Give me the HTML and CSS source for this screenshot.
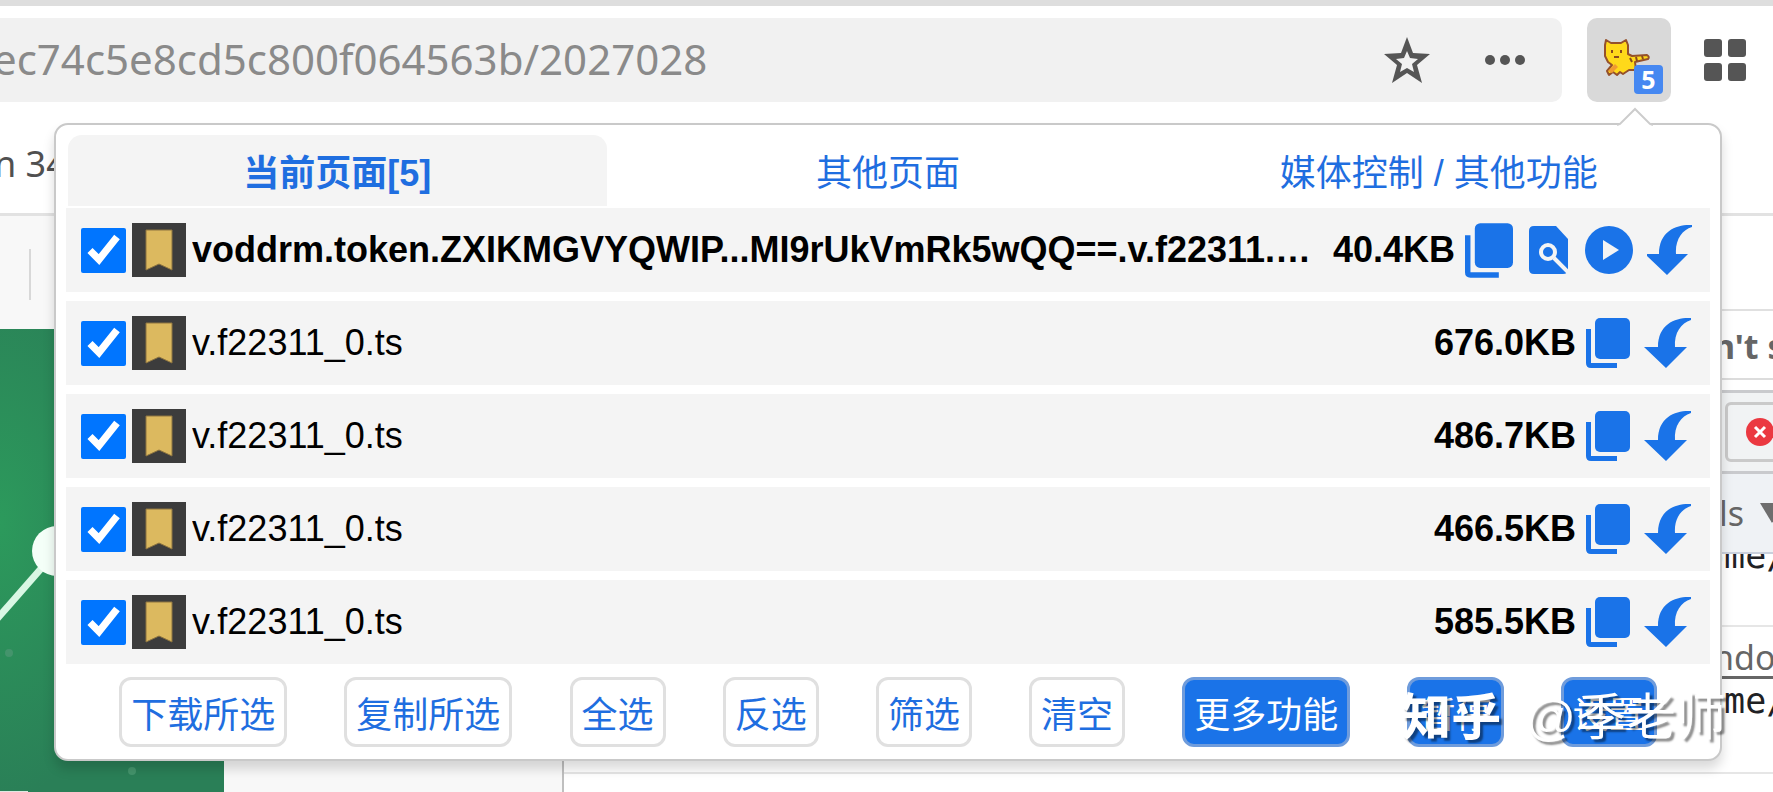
FILE: index.html
```html
<!DOCTYPE html>
<html lang="zh-CN">

<head>
    <meta charset="UTF-8">
    <meta name="viewport" content="width=device-width, initial-scale=1.0">
    <title>猫抓</title>
    <link rel="stylesheet" href="styles.css">
</head>

<body>
    <!-- icons used more than once -->
    <svg class="sprite" aria-hidden="true">
        <symbol id="copy" viewBox="0 0 44 50">
            <rect x="9" y="0" width="35" height="41" rx="5" />
            <path d="M0 11h5v34h26v5H5q-5 0-5-5z" />
        </symbol>
        <symbol id="down" viewBox="0 0 48 52">
            <path d="M47 1C33 0 14 6 14 30H0l22 21 21-21H31C30 16 37 6 47 3z" />
        </symbol>
        <symbol id="bookmark" viewBox="0 0 54 54">
            <rect width="54" height="54" fill="#3c3c3c" />
            <path d="M14 7h26v40l-13-6-13 6z" fill="#dcb95f" stroke="#8d7440" />
        </symbol>
    </svg>

    <div class="toolbar">
        <div class="address">
            <input type="text" class="url" aria-label="地址" value="ec74c5e8cd5c800f064563b/2027028">
            <button class="tool" aria-label="收藏">
                <svg width="48" height="48" viewBox="0 0 48 48"><path fill-rule="evenodd" fill="#555" d="M24 1l6 16 17 1-13 11 5 18-15-10-15 10 5-18L1 18l17-1zM24 15l-3 7-8 1 6 5-2 8 7-4 7 4-2-8 6-5-8-1z" /></svg>
            </button>
            <button class="tool" aria-label="更多">
                <svg width="40" height="10" viewBox="0 0 40 10" fill="#555"><circle cx="5" cy="5" r="5" /><circle cx="20" cy="5" r="5" /><circle cx="35" cy="5" r="5" /></svg>
            </button>
        </div>
        <button class="extension" aria-label="猫抓">
            <svg width="48" height="40" viewBox="0 0 48 40" stroke-linejoin="round">
                <path d="M3 2l5 3h10l5-3 2 5v9l4 2 15-1q3 2 1 4l-13 3 1 8h-7l-6 4-3-2-3 3-4-3-4 3-2-4 5-6-4-3-3-6V7z" fill="#ffd91a" stroke="#95512b" stroke-width="2" />
                <path d="M5 33l7-7 3 3-6 6z" fill="#f09a32" />
                <path d="M9 12v3M18 12v3M11 19h5M27 20l2 4M33 19l1 4M39 18l1 3" fill="none" stroke="#8a4a1c" stroke-width="2" />
            </svg>
            <span class="badge">5</span>
        </button>
        <button class="tool" aria-label="扩展">
            <svg width="42" height="42" viewBox="0 0 42 42" fill="#555"><rect width="18" height="18" rx="3" /><rect x="24" width="18" height="18" rx="3" /><rect y="24" width="18" height="18" rx="3" /><rect x="24" y="24" width="18" height="18" rx="3" /></svg>
        </button>
    </div>

    <div class="bookmarks">n 34</div>

    <div class="page">
        <div class="site">
            <div class="site-head"><span class="divider"></span></div>
            <svg class="cover" viewBox="0 0 224 463" preserveAspectRatio="xMinYMin slice">
                <defs>
                    <radialGradient id="green" cx="0" cy="0.42" r="0.6">
                        <stop offset="0" stop-color="#2c9a5c" />
                        <stop offset="1" stop-color="#2a7f57" />
                    </radialGradient>
                </defs>
                <rect width="224" height="463" fill="url(#green)" />
                <path d="M-4 291L46 234" stroke="#d9f7e4" stroke-width="7" />
                <circle cx="57" cy="222" r="25" fill="#f4fff8" />
                <circle cx="9" cy="324" r="4" fill="#44946c" />
                <circle cx="132" cy="442" r="4" fill="#44946c" />
                <rect y="462" width="28" height="2" fill="#dfe8e2" />
            </svg>
        </div>
        <div class="devtools">
            <div class="dt-blank"></div>
            <div class="dt-title"><b>n't s</b></div>
            <div class="dt-tabs">
                <div class="dt-errors">
                    <svg width="28" height="28" viewBox="0 0 28 28"><circle cx="14" cy="14" r="14" fill="#eb3941" /><path d="M9 9l10 10M19 9L9 19" stroke="#fff" stroke-width="3" /></svg>
                </div>
            </div>
            <div class="dt-levels"><span>ls</span><svg width="24" height="20" viewBox="0 0 24 20"><path d="M0 0h24L12 20z" fill="#6e6e6e" /></svg></div>
            <div class="dt-log first"><code>ome/</code></div>
            <div class="dt-log"><a href="#">ndo</a><code>ome/</code></div>
        </div>
    </div>

    <div class="popup">
        <svg class="arrow" width="36" height="20" viewBox="0 0 36 20"><path d="M0 18L3 17 18 2l15 15 3 1v2H0z" fill="#fff" /><path d="M0 18l3-1L18 2l15 15 3 1" fill="none" stroke="#ccc" stroke-width="2" /></svg>

        <div class="tabs">
            <button class="tab active">当前页面[5]</button>
            <button class="tab">其他页面</button>
            <button class="tab">媒体控制 / 其他功能</button>
        </div>

        <div class="list">
            <div class="item">
                <input type="checkbox" id="f1" checked>
                <svg class="favicon"><use href="#bookmark" /></svg>
                <label class="name bold" for="f1">voddrm.token.ZXIKMGVYQWIP...MI9rUkVmRk5wQQ==.v.f22311.…</label>
                <span class="size">40.4KB</span>
                <button class="icon" aria-label="复制"><svg width="48" height="55"><use href="#copy" /></svg></button>
                <button class="icon wide" aria-label="解析"><svg width="40" height="48" viewBox="0 0 40 48"><path d="M5 0h22l12 13v30q0 5-5 5H5q-5 0-5-5V5q0-5 5-5z" /><path d="M25 32l14 14" stroke="#f4f4f4" stroke-width="4" /><circle cx="19" cy="26" r="7" stroke="#f4f4f4" stroke-width="4" /></svg></button>
                <button class="icon wide" aria-label="播放"><svg width="48" height="48" viewBox="0 0 48 48"><circle cx="24" cy="24" r="24" /><path d="M18 14v20l16-10z" fill="#f4f4f4" /></svg></button>
                <button class="icon" aria-label="下载"><svg width="45" height="52" viewBox="2 0 45 52"><use href="#down" width="48" height="52" /></svg></button>
            </div>
            <div class="item">
                <input type="checkbox" id="f2" checked>
                <svg class="favicon"><use href="#bookmark" /></svg>
                <label class="name" for="f2">v.f22311_0.ts</label>
                <span class="size">676.0KB</span>
                <button class="icon" aria-label="复制"><svg width="44" height="50"><use href="#copy" /></svg></button>
                <button class="icon" aria-label="下载"><svg width="48" height="52"><use href="#down" /></svg></button>
            </div>
            <div class="item">
                <input type="checkbox" id="f3" checked>
                <svg class="favicon"><use href="#bookmark" /></svg>
                <label class="name" for="f3">v.f22311_0.ts</label>
                <span class="size">486.7KB</span>
                <button class="icon" aria-label="复制"><svg width="44" height="50"><use href="#copy" /></svg></button>
                <button class="icon" aria-label="下载"><svg width="48" height="52"><use href="#down" /></svg></button>
            </div>
            <div class="item">
                <input type="checkbox" id="f4" checked>
                <svg class="favicon"><use href="#bookmark" /></svg>
                <label class="name" for="f4">v.f22311_0.ts</label>
                <span class="size">466.5KB</span>
                <button class="icon" aria-label="复制"><svg width="44" height="50"><use href="#copy" /></svg></button>
                <button class="icon" aria-label="下载"><svg width="48" height="52"><use href="#down" /></svg></button>
            </div>
            <div class="item">
                <input type="checkbox" id="f5" checked>
                <svg class="favicon"><use href="#bookmark" /></svg>
                <label class="name" for="f5">v.f22311_0.ts</label>
                <span class="size">585.5KB</span>
                <button class="icon" aria-label="复制"><svg width="44" height="50"><use href="#copy" /></svg></button>
                <button class="icon" aria-label="下载"><svg width="48" height="52"><use href="#down" /></svg></button>
            </div>
        </div>

        <div class="actions">
            <button class="btn">下载所选</button>
            <button class="btn">复制所选</button>
            <button class="btn">全选</button>
            <button class="btn">反选</button>
            <button class="btn">筛选</button>
            <button class="btn">清空</button>
            <button class="btn primary">更多功能</button>
            <button class="btn primary">暂停</button>
            <button class="btn primary">设置</button>
        </div>
    </div>

    <div class="watermark"><b>知乎</b><span>@季老师</span></div>
</body>

</html>
```
FILE: styles.css
```css
* {
    margin: 0;
    padding: 0;
    box-sizing: border-box;
}

body {
    position: relative;
    display: flex;
    flex-direction: column;
    height: 100vh;
    overflow: hidden;
    background: #fff;
    border-top: 6px solid #dedede;
    font-family: "Liberation Sans", "Noto Sans CJK SC", sans-serif;
    font-size: 36px;
}

button {
    font: inherit;
    background: none;
    border: none;
}

svg {
    display: block;
}

.sprite {
    position: absolute;
    width: 0;
    height: 0;
}

/* browser toolbar */
.toolbar {
    display: flex;
    align-items: center;
    padding: 12px 27px 0 0;
}

.address {
    flex: 1;
    display: flex;
    align-items: center;
    gap: 54px;
    height: 84px;
    padding-right: 37px;
    margin-right: 25px;
    background: #f1f1f1;
    border-radius: 0 10px 10px 0;
}

.url {
    flex: 1;
    min-width: 0;
    height: 84px;
    margin-left: -7px;
    padding-bottom: 4px;
    border: none;
    background: none;
    color: #8a8a8a;
    font-family: "Noto Sans", sans-serif;
    font-size: 42px;
}

.extension {
    position: relative;
    width: 84px;
    height: 84px;
    margin-right: 33px;
    padding: 0 0 4px 16px;
    background: #d9d9d9;
    border-radius: 10px;
}

.badge {
    position: absolute;
    right: 8px;
    bottom: 8px;
    width: 29px;
    height: 29px;
    border-radius: 4px;
    background: #4688f1;
    color: #fff;
    font: bold 25px/29px "Noto Sans", sans-serif;
}

.bookmarks {
    height: 114px;
    padding-top: 12px;
    border-bottom: 3px solid #e2e2e2;
    color: #505050;
    font: 36px/100px "Noto Sans", sans-serif;
    text-indent: -6px;
}

/* page behind the popup */
.page {
    flex: 1;
    display: flex;
    min-height: 0;
}

.site {
    width: 564px;
    display: flex;
    flex-direction: column;
    background: #f8f8f8;
    border-right: 2px solid #bfbfbf;
}

.site-head {
    padding: 33px 29px 29px;
}

.divider {
    display: block;
    width: 2px;
    height: 51px;
    background: #d8d8d8;
}

.cover {
    flex: 1;
    width: 224px;
    min-height: 0;
}

.devtools {
    flex: 1;
    display: flex;
    flex-direction: column;
    color: #666;
    font: 34px/40px "Noto Sans", sans-serif;
}

.devtools > div {
    display: flex;
    flex-shrink: 0;
    align-items: center;
    padding-left: calc(100% - 60px);
    overflow: hidden;
    white-space: nowrap;
}

.devtools .dt-blank {
    height: 95px;
    border-bottom: 2px solid #e0e0e0;
}

.devtools .dt-title {
    height: 69px;
    padding-top: 3px;
    border-bottom: 2px solid #dcdcdc;
}

.devtools .dt-tabs {
    height: 84px;
    margin-top: 10px;
    padding-left: calc(100% - 48px);
    background: #f1f3f4;
    border-top: 3px solid #c9cacd;
    border-bottom: 3px solid #c9cacd;
}

.dt-errors {
    flex-shrink: 0;
    width: 90px;
    height: 60px;
    padding: 13px 18px;
    border: 3px solid #cacaca;
    border-radius: 6px;
}

.devtools .dt-levels {
    height: 80px;
    padding-left: calc(100% - 54px);
    gap: 16px;
    background: #eff2f5;
    border-bottom: 2px solid #c9d0dc;
}

.dt-levels svg {
    flex-shrink: 0;
}

.devtools .dt-log {
    flex-direction: column;
    align-items: flex-start;
    height: 147px;
    padding-top: 10px;
    border-bottom: 2px solid #e6e6e6;
}

.devtools .dt-log.first {
    height: 73px;
    padding-top: 0;
}

.dt-log.first code {
    margin-top: -22px;
}

.dt-log a {
    color: #666;
    text-underline-offset: 6px;
}

.dt-log code {
    margin-left: -10px;
    color: #202124;
    font: 35px/48px "DejaVu Sans Mono", monospace;
}

/* extension popup */
.popup {
    position: absolute;
    top: 117px;
    left: 54px;
    right: 51px;
    padding: 10px 6px 12px;
    background: #fff;
    border: 2px solid #c9c9c9;
    border-radius: 14px;
    box-shadow: 0 8px 12px rgba(0, 0, 0, 0.15);
}

.arrow {
    position: absolute;
    top: -18px;
    right: 67px;
}

.tabs {
    display: flex;
    margin-bottom: 2px;
}

.tab {
    flex: 1;
    height: 71px;
    margin: 0 6px;
    padding-bottom: 1px;
    border-radius: 14px 14px 0 0;
    color: #1f6ee0;
}

.tab.active {
    background: #f4f4f4;
    font-weight: bold;
}

.list {
    display: flex;
    flex-direction: column;
    gap: 9px;
    margin: 0 4px;
}

.item {
    display: flex;
    align-items: center;
    height: 84px;
    padding: 0 18px 0 15px;
    background: #f4f4f4;
}

.item input {
    width: 45px;
    height: 45px;
    margin-right: 6px;
    accent-color: #0075ff;
}

.favicon {
    width: 54px;
    height: 54px;
    margin-right: 6px;
}

.name {
    flex: 1;
    min-width: 0;
    overflow: hidden;
    white-space: nowrap;
}

.bold,
.size {
    font-weight: bold;
}

.icon {
    margin-left: 14px;
    fill: #1a73e8;
}

.size + .icon {
    margin-left: 10px;
}

.icon.wide {
    margin-left: 16px;
}

.actions {
    display: flex;
    justify-content: space-evenly;
    margin-top: 13px;
}

.btn {
    height: 70px;
    padding: 0 9px;
    border: 3px solid #e0e0e0;
    border-radius: 12px;
    color: #1f6ee0;
}

.btn.primary {
    background: #1a73e8;
    border-color: #6f9cdc;
    color: #fff;
}

.watermark {
    position: absolute;
    right: 47px;
    bottom: 34px;
    display: flex;
    gap: 24px;
    color: #fff;
    font-size: 50px;
    line-height: 80px;
    text-shadow: 3px 3px 2px rgba(0, 0, 0, 0.45);
    pointer-events: none;
}
```
